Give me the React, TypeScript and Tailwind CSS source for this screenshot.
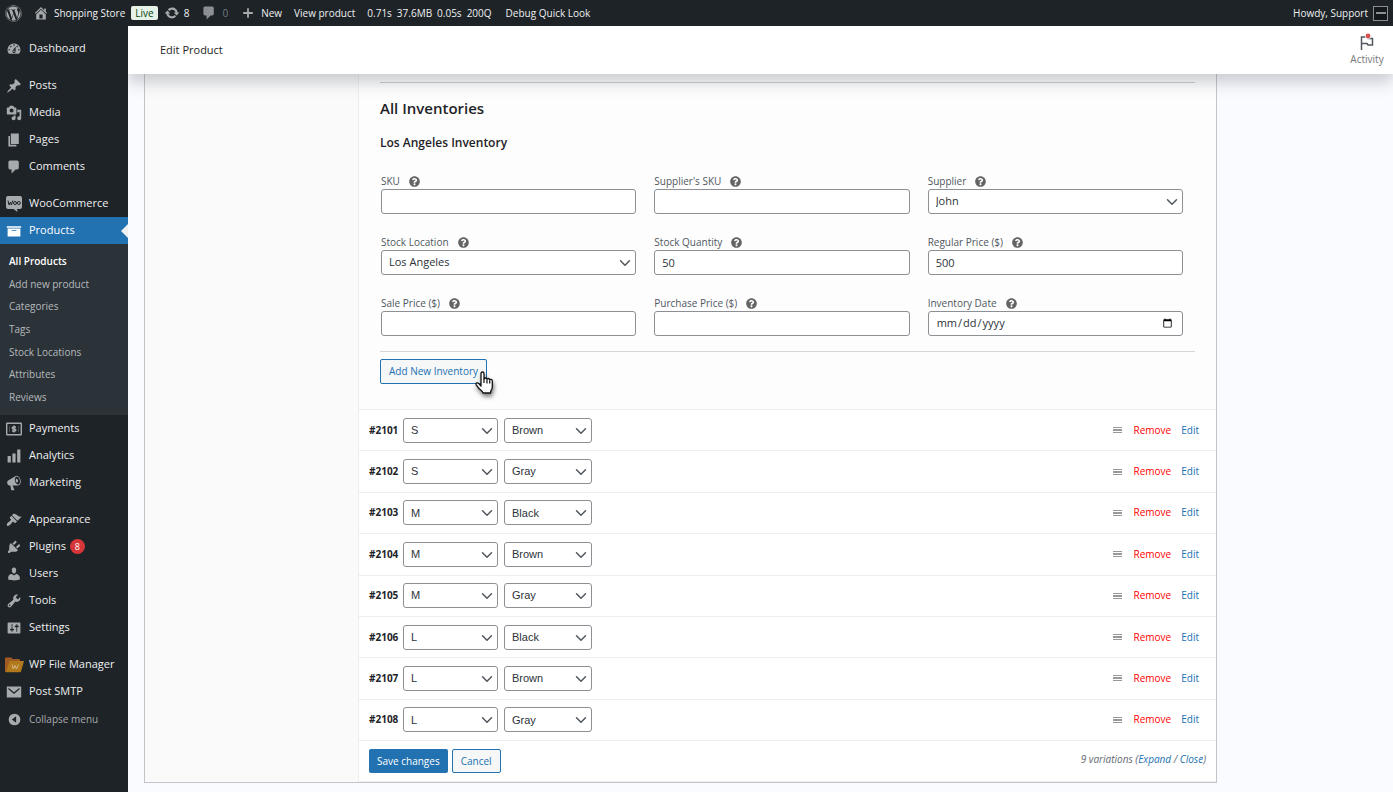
import { useId } from 'react';
import type { ReactNode } from 'react';
import { ChevronDown } from 'lucide-react';
import { FaQuestionCircle, FaWordpress } from 'react-icons/fa';
import clsx from 'clsx';

const ICONS = {
    dashboard: 'M3.76 16h12.48A7.998 7.998 0 0 0 10 3a7.998 7.998 0 0 0-6.24 13zM10 4c.55 0 1 .45 1 1s-.45 1-1 1-1-.45-1-1 .45-1 1-1zM6 6c.55 0 1 .45 1 1s-.45 1-1 1-1-.45-1-1 .45-1 1-1zm8 0c.55 0 1 .45 1 1s-.45 1-1 1-1-.45-1-1 .45-1 1-1zm-5.37 5.55L12 7v6c0 1.1-.9 2-2 2s-2-.9-2-2c0-.57.24-1.08.63-1.45zM4 10c.55 0 1 .45 1 1s-.45 1-1 1-1-.45-1-1 .45-1 1-1zm12 0c.55 0 1 .45 1 1s-.45 1-1 1-1-.45-1-1 .45-1 1-1zm-5 3c0-.55-.45-1-1-1s-1 .45-1 1 .45 1 1 1 1-.45 1-1z',
    pin: 'M10.44 3.02l1.82-1.82 6.36 6.35-1.83 1.82c-1.05-.68-2.48-.57-3.41.36l-.75.75c-.92.93-1.04 2.35-.35 3.41l-1.83 1.82-2.41-2.41-2.8 2.79c-.42.42-3.38 2.71-3.8 2.29s1.86-3.39 2.28-3.81l2.79-2.79L4.1 9.36l1.83-1.82c1.05.69 2.48.57 3.4-.36l.75-.75c.93-.92 1.05-2.35.36-3.41z',
    media: 'M13 11V4c0-.55-.45-1-1-1h-1.67L9 1H5L3.67 3H2c-.55 0-1 .45-1 1v7c0 .55.45 1 1 1h10c.55 0 1-.45 1-1zM7 4.5c1.38 0 2.5 1.12 2.5 2.5S8.38 9.5 7 9.5 4.5 8.38 4.5 7 5.62 4.5 7 4.5zM14 6h5v10.5c0 1.38-1.12 2.5-2.5 2.5S14 17.88 14 16.5s1.12-2.5 2.5-2.5c.17 0 .34.02.5.05V9h-3V6zm-4 8.05V13h2v3.5c0 1.38-1.12 2.5-2.5 2.5S7 17.88 7 16.5 8.12 14 9.5 14c.17 0 .34.02.5.05z',
    pages: 'M6 15V2h10v13H6zm-1 1h8v2H3V5h2v11z',
    comment: 'M5 2h9c1.1 0 2 .9 2 2v7c0 1.1-.9 2-2 2h-2l-5 5v-5H5c-1.1 0-2-.9-2-2V4c0-1.1.9-2 2-2z',
    archive: 'M19 4v2H1V4h18zM2 7h16v10H2V7zm11 3V9H7v1h6z',
    chart: 'M18 18V2h-4v16h4zm-6 0V7H8v11h4zm-6 0v-8H2v8h4z',
    megaphone: 'M18.15 5.94c.46 1.62.38 3.22-.02 4.48-.42 1.28-1.26 2.18-2.3 2.48-.16.06-.26.06-.4.06-.06.02-.12.02-.18.02-.06.02-.14.02-.22.02h-6.8l2.22 5.5c.02.14-.06.26-.14.34-.08.1-.24.16-.34.16H6.95c-.1 0-.26-.06-.34-.16-.08-.08-.16-.2-.14-.34l-1-5.5H4.25l-.02-.02c-.5.06-1.08-.18-1.54-.62s-.88-1.08-1.06-1.88c-.24-.8-.2-1.56-.02-2.2.18-.62.58-1.08 1.06-1.3l.02-.02 9-5.4c.1-.06.18-.1.24-.16.06-.04.14-.08.24-.12.16-.08.28-.12.5-.18 1.04-.3 2.24.1 3.22.98s1.84 2.24 2.26 3.86zm-2.58 5.98h-.02c.4-.1.74-.34 1.04-.7.58-.7.86-1.76.86-3.04 0-.64-.1-1.3-.28-1.98-.34-1.36-1.02-2.5-1.78-3.24s-1.68-1.1-2.46-.88c-.82.22-1.4.96-1.7 2-.32 1.04-.28 2.36.06 3.72.38 1.36 1 2.5 1.8 3.24.78.74 1.62 1.1 2.48.88zm-2.54-7.08c.22-.04.42-.02.62.04.38.16.76.48 1.02 1s.42 1.2.42 1.78c0 .3-.04.56-.12.8-.18.48-.44.84-.86.94-.34.1-.8-.06-1.14-.4s-.64-.86-.78-1.5c-.18-.62-.12-1.24.02-1.72s.48-.84.82-.94z',
    brush: 'M14.48 11.06L7.41 3.99l1.5-1.5c.5-.56 2.3-.47 3.51.32 1.21.8 1.43 1.28 2.91 2.1 1.18.64 2.45 1.26 4.45.85zm-.71.71L6.7 4.7 4.93 6.47c-.39.39-.39 1.02 0 1.41l1.06 1.06c.39.39.39 1.03 0 1.42-.6.6-1.43 1.11-2.21 1.69-.35.26-.7.53-1.01.84C1.43 14.23.4 16.08 1.4 17.07c.99 1 2.84-.03 4.18-1.36.31-.31.58-.66.85-1.02.57-.78 1.08-1.61 1.69-2.21.39-.39 1.02-.39 1.41 0l1.06 1.06c.39.39 1.02.39 1.41 0z',
    plug: 'M13.11 4.36L9.87 7.6 8 5.73l3.24-3.24c.35-.34 1.05-.2 1.56.32.52.51.66 1.21.31 1.55zm-8 1.77l.91-1.12 9.01 9.01-1.19.84c-.71.71-2.63 1.16-3.82 1.16H6.14L4.9 17.26c-.59.59-1.54.59-2.12 0-.59-.58-.59-1.53 0-2.12l1.24-1.24v-3.88c0-1.13.4-3.19 1.09-3.89zm7.26 3.97l3.24-3.24c.34-.35 1.04-.21 1.55.31.52.51.66 1.21.31 1.55l-3.24 3.25z',
    user: 'M10 9.25c-2.27 0-2.73-3.44-2.73-3.44C7 4.02 7.82 2 9.97 2c2.16 0 2.98 2.02 2.71 3.81 0 0-.41 3.44-2.68 3.44zm0 2.57L12.72 10c2.39 0 4.52 2.33 4.52 4.53v2.49s-3.65 1.13-7.24 1.13c-3.65 0-7.24-1.13-7.24-1.13v-2.49c0-2.25 1.94-4.48 4.47-4.48z',
    wrench: 'M16.68 9.77c-1.34 1.34-3.3 1.67-4.95.99l-5.41 6.52c-.99.99-2.59.99-3.58 0s-.99-2.59 0-3.57l6.52-5.42c-.68-1.65-.35-3.61.99-4.95 1.28-1.28 3.12-1.62 4.72-1.06l-2.89 2.89 2.82 2.82 2.86-2.87c.53 1.58.18 3.39-1.08 4.65zM3.81 16.21c.4.39 1.04.39 1.43 0 .4-.4.4-1.04 0-1.43-.39-.4-1.03-.4-1.43 0-.39.39-.39 1.03 0 1.43z',
    sliders: 'M18 16V4c0-.55-.45-1-1-1H3c-.55 0-1 .45-1 1v12c0 .55.45 1 1 1h14c.55 0 1-.45 1-1zM8 11h1c.55 0 1 .45 1 1s-.45 1-1 1H8v1.5c0 .28-.22.5-.5.5s-.5-.22-.5-.5V13H6c-.55 0-1-.45-1-1s.45-1 1-1h1V5.5c0-.28.22-.5.5-.5s.5.22.5.5V11zm5-2h-1c-.55 0-1-.45-1-1s.45-1 1-1h1V5.5c0-.28.22-.5.5-.5s.5.22.5.5V7h1c.55 0 1 .45 1 1s-.45 1-1 1h-1v5.5c0 .28-.22.5-.5.5s-.5-.22-.5-.5V9z',
    mail: 'M1 3h18v14H1V3zm2 1.6v2L10 12.4l7-5.8v-2l-7 5.6z',
    collapse: 'M10 1a9 9 0 1 0 0 18a9 9 0 0 0 0-18zm2.5 4v10L6 10z',
    home: 'M16 8.5l1.53 1.53-1.06 1.06L10 4.6l-6.47 6.49-1.06-1.06L10 2.5l4 4v-2h2v4zm-6-2.46l6 5.99V18H4v-5.97zM12 17v-5H8v5h4z',
    update: 'M10.2 3.28c3.53 0 6.43 2.61 6.92 6h2.08l-3.5 4-3.5-4h2.32c-.45-1.97-2.21-3.45-4.32-3.45-1.45 0-2.73.71-3.54 1.78L4.95 5.66C6.23 4.2 8.11 3.28 10.2 3.28zm-.4 13.44c-3.52 0-6.43-2.61-6.92-6H.8l3.5-4c1.17 1.33 2.33 2.67 3.5 4H5.48c.45 1.97 2.21 3.45 4.32 3.45 1.45 0 2.73-.71 3.54-1.78l1.71 1.95c-1.28 1.46-3.15 2.38-5.25 2.38z',
    plus: 'M2 8.5h6.5V2h3v6.5H18v3h-6.5V18h-3v-6.5H2z',
};

type IconName = keyof typeof ICONS;

function Icon({ name, className = 'w-4 h-4' }: { name: IconName; className?: string }) {
    return (
        <svg viewBox="0 0 20 20" className={clsx('shrink-0', className)} fill="currentColor" fillRule="evenodd" aria-hidden="true">
            <path d={ICONS[name]} />
        </svg>
    );
}

function WooIcon() {
    return (
        <svg viewBox="0 0 16 16" className="w-4 h-4" aria-hidden="true">
            <path d="M2 0h12q2 0 2 2v9q0 2-2 2h-3l.5 3L7.500 13H2q-2 0-2-2V2q0-2 2-2z" fill="#a7aaad" />
            <path d="M2 4.500l1 4.500 1.500-3 .8 3L6.800 4.500" fill="none" stroke="#1d2327" strokeWidth="1" />
            <circle cx="9" cy="7" r="1.500" fill="none" stroke="#1d2327" />
            <circle cx="12.800" cy="7" r="1.500" fill="none" stroke="#1d2327" />
        </svg>
    );
}

function PaymentsIcon() {
    return (
        <svg viewBox="0 0 16 14" className="w-4 h-4" fill="none" stroke="#a7aaad" aria-hidden="true">
            <rect x="0.700" y="1.200" width="14.600" height="11.600" rx="0.500" strokeWidth="1.400" />
            <path d="M10 5H7.200a1 1 0 0 0 0 2h1.600a1 1 0 0 1 0 2H6M8 3.500v7" strokeWidth="1.400" />
            <path d="M3.500 4v6M12.500 4v6" strokeWidth="1" opacity="0.300" />
        </svg>
    );
}

function FolderIcon() {
    return (
        <svg viewBox="0 0 19 16" className="w-[19px] h-4 -ml-px shrink-0" aria-hidden="true">
            <path d="M1 .5h5.500l1.200 1.500H14q1 0 1 1V15H0V1.500Q0 .5 1 .5z" fill="#a05a24" />
            <path d="M4.500 4H19l-3 10.500q-.3.800-1 .8H1z" fill="#b1791b" />
            <path d="M7 7.500l1.300 4.500 1.700-3.500 1.500 3.500L13.500 7.500" fill="none" stroke="#d7b98a" strokeWidth="1" />
        </svg>
    );
}

interface MenuItem {
    label: string;
    icon: ReactNode;
    badge?: string;
    active?: boolean;
}

const menuTop: MenuItem[][] = [
    [{ label: 'Dashboard', icon: <Icon name="dashboard" /> }],
    [
        { label: 'Posts', icon: <Icon name="pin" /> },
        { label: 'Media', icon: <Icon name="media" /> },
        { label: 'Pages', icon: <Icon name="pages" /> },
        { label: 'Comments', icon: <Icon name="comment" /> },
    ],
    [
        { label: 'WooCommerce', icon: <WooIcon /> },
        { label: 'Products', icon: <Icon name="archive" />, active: true },
    ],
];

const subMenu = ['All Products', 'Add new product', 'Categories', 'Tags', 'Stock Locations', 'Attributes', 'Reviews'];

const menuBottom: MenuItem[][] = [
    [
        { label: 'Payments', icon: <PaymentsIcon /> },
        { label: 'Analytics', icon: <Icon name="chart" /> },
        { label: 'Marketing', icon: <Icon name="megaphone" /> },
    ],
    [
        { label: 'Appearance', icon: <Icon name="brush" /> },
        { label: 'Plugins', icon: <Icon name="plug" />, badge: '8' },
        { label: 'Users', icon: <Icon name="user" /> },
        { label: 'Tools', icon: <Icon name="wrench" /> },
        { label: 'Settings', icon: <Icon name="sliders" /> },
    ],
    [
        { label: 'WP File Manager', icon: <FolderIcon /> },
        { label: 'Post SMTP', icon: <Icon name="mail" /> },
    ],
];

const variations = [
    { id: 2101, size: 'S', color: 'Brown' },
    { id: 2102, size: 'S', color: 'Gray' },
    { id: 2103, size: 'M', color: 'Black' },
    { id: 2104, size: 'M', color: 'Brown' },
    { id: 2105, size: 'M', color: 'Gray' },
    { id: 2106, size: 'L', color: 'Black' },
    { id: 2107, size: 'L', color: 'Brown' },
    { id: 2108, size: 'L', color: 'Gray' },
];

function AdminBar() {
    return (
        <header className="relative z-20 flex items-center h-[26px] shrink-0 px-[5px] bg-[#1d2327] text-[10px] text-[#f0f0f1] whitespace-nowrap">
            <a href="#" aria-label="About WordPress" className="text-[#a7aaad]">
                <FaWordpress className="w-[17px] h-[17px]" />
            </a>
            <a href="#" className="flex items-center gap-[5px] ml-[11px]">
                <Icon name="home" className="w-4 h-4 text-[#a7aaad]" />
                Shopping Store
            </a>
            <span className="ml-1.5 px-1 rounded-xs bg-[#e6f2e8] text-[#00450c] leading-[14px]">Live</span>
            <a href="#" className="flex items-center gap-1 ml-1.5">
                <Icon name="update" className="w-4 h-4 text-[#a7aaad]" />
                8
            </a>
            <a href="#" className="flex items-center gap-[5px] ml-3 text-[#72777c]">
                <Icon name="comment" className="w-4 h-4 text-[#8c8f94]" />
                0
            </a>
            <a href="#" className="flex items-center gap-[5px] ml-3">
                <Icon name="plus" className="w-3 h-3 mx-0.5 text-[#a7aaad]" />
                New
            </a>
            <a href="#" className="ml-3">View product</a>
            <a href="#" className="flex gap-[5px] ml-3">
                <span>0.71s</span>
                <span>37.6MB</span>
                <span>0.05s</span>
                <span>200Q</span>
            </a>
            <a href="#" className="ml-3.5">Debug Quick Look</a>
            <a href="#" className="flex items-center gap-[5px] ml-auto">
                Howdy, Support
                <span className="flex items-center justify-center w-[15px] h-[15px] border border-[#8c8f94] bg-[#15181b]">
                    <span className="w-2.5 h-0.5 bg-[#8c8f94]"></span>
                </span>
            </a>
        </header>
    );
}

function MenuLink({ item }: { item: MenuItem }) {
    return (
        <a
            href="#"
            className={clsx(
                'relative flex items-center h-[27px] pl-1.5 text-[11px]',
                item.active ? 'bg-[#2271b1] text-white' : 'text-[#f0f0f1]',
            )}
        >
            <span className={clsx('flex w-[23px]', item.active ? 'text-white' : 'text-[#a7aaad]')}>{item.icon}</span>
            {item.label}
            {item.badge && (
                <span className="flex items-center justify-center w-[15px] h-[15px] ml-1 rounded-full bg-[#d63638] text-white text-[9px]">
                    {item.badge}
                </span>
            )}
            {item.active && (
                <span className="absolute right-0 top-[7px] border-y-[7px] border-r-[7px] border-y-transparent border-r-[#f0f0f1]"></span>
            )}
        </a>
    );
}

function Sidebar() {
    return (
        <nav className="relative z-20 flex flex-col w-32 shrink-0 pt-[9px] bg-[#1d2327] whitespace-nowrap">
            <div className="flex flex-col gap-2.5">
                {menuTop.map((group, index) => (
                    <div key={index}>
                        {group.map((item) => <MenuLink key={item.label} item={item} />)}
                    </div>
                ))}
            </div>
            <div className="flex flex-col min-h-[171px] py-1.5 bg-[#2c3338] text-[10px] text-[#b4b9be]">
                {subMenu.map((label, index) => (
                    <a
                        key={label}
                        href="#"
                        className={clsx('flex flex-1 items-center pl-[9px]', index === 0 && 'font-semibold text-white')}
                    >
                        {label}
                    </a>
                ))}
            </div>
            <div className="flex flex-col gap-2.5">
                {menuBottom.map((group, index) => (
                    <div key={index}>
                        {group.map((item) => <MenuLink key={item.label} item={item} />)}
                    </div>
                ))}
            </div>
            <button type="button" className="flex items-center h-7 pl-2 text-[10px] text-[#a7aaad]">
                <span className="flex w-[21px]">
                    <Icon name="collapse" className="w-[13px] h-[13px]" />
                </span>
                Collapse menu
            </button>
        </nav>
    );
}

function PageHeader() {
    return (
        <div className="relative z-10 flex items-center justify-between h-12 shrink-0 pl-8 bg-white shadow-[0_8px_16px_0_rgba(85,93,102,0.3)]">
            <h1 className="text-[11px] font-medium text-[#1e1e1e]">Edit Product</h1>
            <button type="button" className="flex flex-col items-center w-[52px] text-[10px] leading-4 text-[#757575]">
                <svg viewBox="0 0 16 18" className="w-4 h-[18px]" fill="none" aria-hidden="true">
                    <path d="M2.500 17V4H8l1 1.500h4.500v6.500H9L8 10.500H2.500" stroke="#50575e" strokeWidth="1.500" />
                    <circle cx="9" cy="3" r="3" fill="#ffffff" />
                    <circle cx="9" cy="3" r="2.400" fill="#d94f4f" />
                </svg>
                Activity
            </button>
        </div>
    );
}

const controlClass = 'w-full h-[25px] px-[7px] rounded-[3px] border border-[#8c8f94] bg-white text-[11px] text-[#2c3338]';

interface SelectProps {
    id?: string;
    label?: string;
    value: string;
    className?: string;
}

function Select({ id, label, value, className }: SelectProps) {
    return (
        <div className={clsx('relative', className)}>
            <select id={id} aria-label={label} className={clsx(controlClass, 'block appearance-none')} defaultValue={value}>
                <option>{value}</option>
            </select>
            <ChevronDown className="absolute right-0.5 top-1 w-[18px] h-[18px] text-[#50575e] pointer-events-none" />
        </div>
    );
}

interface FieldProps {
    label: string;
    value?: string;
    type?: 'text' | 'select' | 'date';
}

function Field({ label, value = '', type = 'text' }: FieldProps) {
    const id = useId();

    return (
        <div className="min-w-0">
            <div className="flex items-center gap-[9px] h-4 text-[10px] text-[#50575e]">
                <label htmlFor={id}>{label}</label>
                <FaQuestionCircle className="w-[11px] h-[11px] text-[#646464]" />
            </div>
            {type === 'select' ? (
                <Select id={id} value={value} />
            ) : (
                <input id={id} type={type} defaultValue={value} className={clsx(controlClass, 'block')} />
            )}
        </div>
    );
}

function HandCursor() {
    return (
        <svg
            viewBox="0 0 18 24"
            className="absolute left-[95px] top-3 w-[18px] h-6 overflow-visible pointer-events-none drop-shadow-[1px_3px_2px_rgba(0,0,0,0.5)]"
            aria-hidden="true"
        >
            <path
                d="M6 2.800Q6 1 7.500 1T9 2.800V8q.3-1 1.500-1t1.500 1.300q.3-.8 1.400-.8T14.700 9q.3-.6 1.200-.6 1.400 0 1.400 1.700v5.400q0 2.500-1.300 4l-.5 2.500H8l-.7-1.500Q4 18 1.200 13.800q-.6-1.300.5-1.900 1.200-.4 2.300 1L6 15z"
                fill="#fff"
                stroke="#111"
                strokeWidth="1.300"
                strokeLinejoin="round"
            />
            <path d="M9 8v4M12 9v3.500M14.700 9.500v3" stroke="#111" strokeWidth="1.200" />
        </svg>
    );
}

function Inventories() {
    return (
        <section className="px-[21px] pt-2 pb-[25px] bg-[#fdfdfd]">
            <hr className="border-[#c9cacc]" />
            <h2 className="mt-[13px] text-[15px] leading-6 font-semibold text-[#1d2327]">All Inventories</h2>
            <h3 className="mt-[13px] text-[12px] leading-5 font-semibold text-[#1d2327]">Los Angeles Inventory</h3>
            <div className="grid grid-cols-3 gap-x-[18px] gap-y-5 mt-5 pl-px pr-3">
                <Field label="SKU" />
                <Field label="Supplier's SKU" />
                <Field label="Supplier" type="select" value="John" />
                <Field label="Stock Location" type="select" value="Los Angeles" />
                <Field label="Stock Quantity" value="50" />
                <Field label="Regular Price ($)" value="500" />
                <Field label="Sale Price ($)" />
                <Field label="Purchase Price ($)" />
                <Field label="Inventory Date" type="date" />
            </div>
            <hr className="mt-[15px] border-[#d5d6d8]" />
            <div className="relative w-fit mt-[7px]">
                <button type="button" className="block h-[25px] px-2 rounded-xs border border-[#2271b1] bg-[#f6f7f7] text-[10px] text-[#2271b1]">
                    Add New Inventory
                </button>
                <HandCursor />
            </div>
        </section>
    );
}

function VariationRow({ id, size, color }: { id: number; size: string; color: string }) {
    return (
        <li className="flex items-center pl-2.5 pr-[17px] border-t border-[#eeeeee] text-[10px]">
            <strong className="w-[34px] text-[#1d2327]">#{id}</strong>
            <div className="flex gap-1.5 font-['Liberation_Sans',sans-serif]">
                <Select label="Size" value={size} className="w-[95px]" />
                <Select label="Color" value={color} className="w-[88px]" />
            </div>
            <svg viewBox="0 0 9 6" className="w-[9px] h-1.5 ml-auto" fill="#999999" shapeRendering="crispEdges" aria-hidden="true">
                <path d="M0 0h9v1H0zM0 2h9v1H0zM0 3h9v1H0zM0 5h9v1H0z" />
            </svg>
            <a href="#" className="ml-3 text-[#ff0000]">Remove</a>
            <a href="#" className="ml-2.5 text-[#2271b1]">Edit</a>
        </li>
    );
}

function App() {
    return (
        <div className="flex flex-col min-h-screen overflow-x-hidden bg-[#fafbff] font-['Open_Sans','Noto_Sans',sans-serif] leading-normal">
            <AdminBar />
            <div className="flex flex-1">
                <Sidebar />
                <div className="flex flex-col flex-1 min-w-0">
                    <PageHeader />
                    <main className="flex ml-4 mr-44 border border-t-0 border-[#c3c4c7] bg-white">
                        <div className="w-[214px] shrink-0 border-r border-[#eeeeee] bg-[#fafafa]"></div>
                        <div className="flex-1 min-w-0">
                            <Inventories />
                            <ul className="grid auto-rows-fr min-h-[331px]">
                                {variations.map((row) => <VariationRow key={row.id} {...row} />)}
                            </ul>
                            <div className="flex items-center gap-1 h-[42px] px-2.5 border-y border-[#eeeeee] text-[10px]">
                                <button type="button" className="h-6 px-2 rounded-xs bg-[#2271b1] font-medium text-white">
                                    Save changes
                                </button>
                                <button type="button" className="h-6 px-2 rounded-xs border border-[#2271b1] bg-[#f6f7f7] text-[#2271b1]">
                                    Cancel
                                </button>
                                <span className="ml-auto mb-1 italic text-[#646970]">
                                    9 variations (<a href="#" className="text-[#2271b1]">Expand</a> / <a href="#" className="text-[#2271b1]">Close</a>)
                                </span>
                            </div>
                        </div>
                    </main>
                </div>
            </div>
        </div>
    );
}

export default App;
